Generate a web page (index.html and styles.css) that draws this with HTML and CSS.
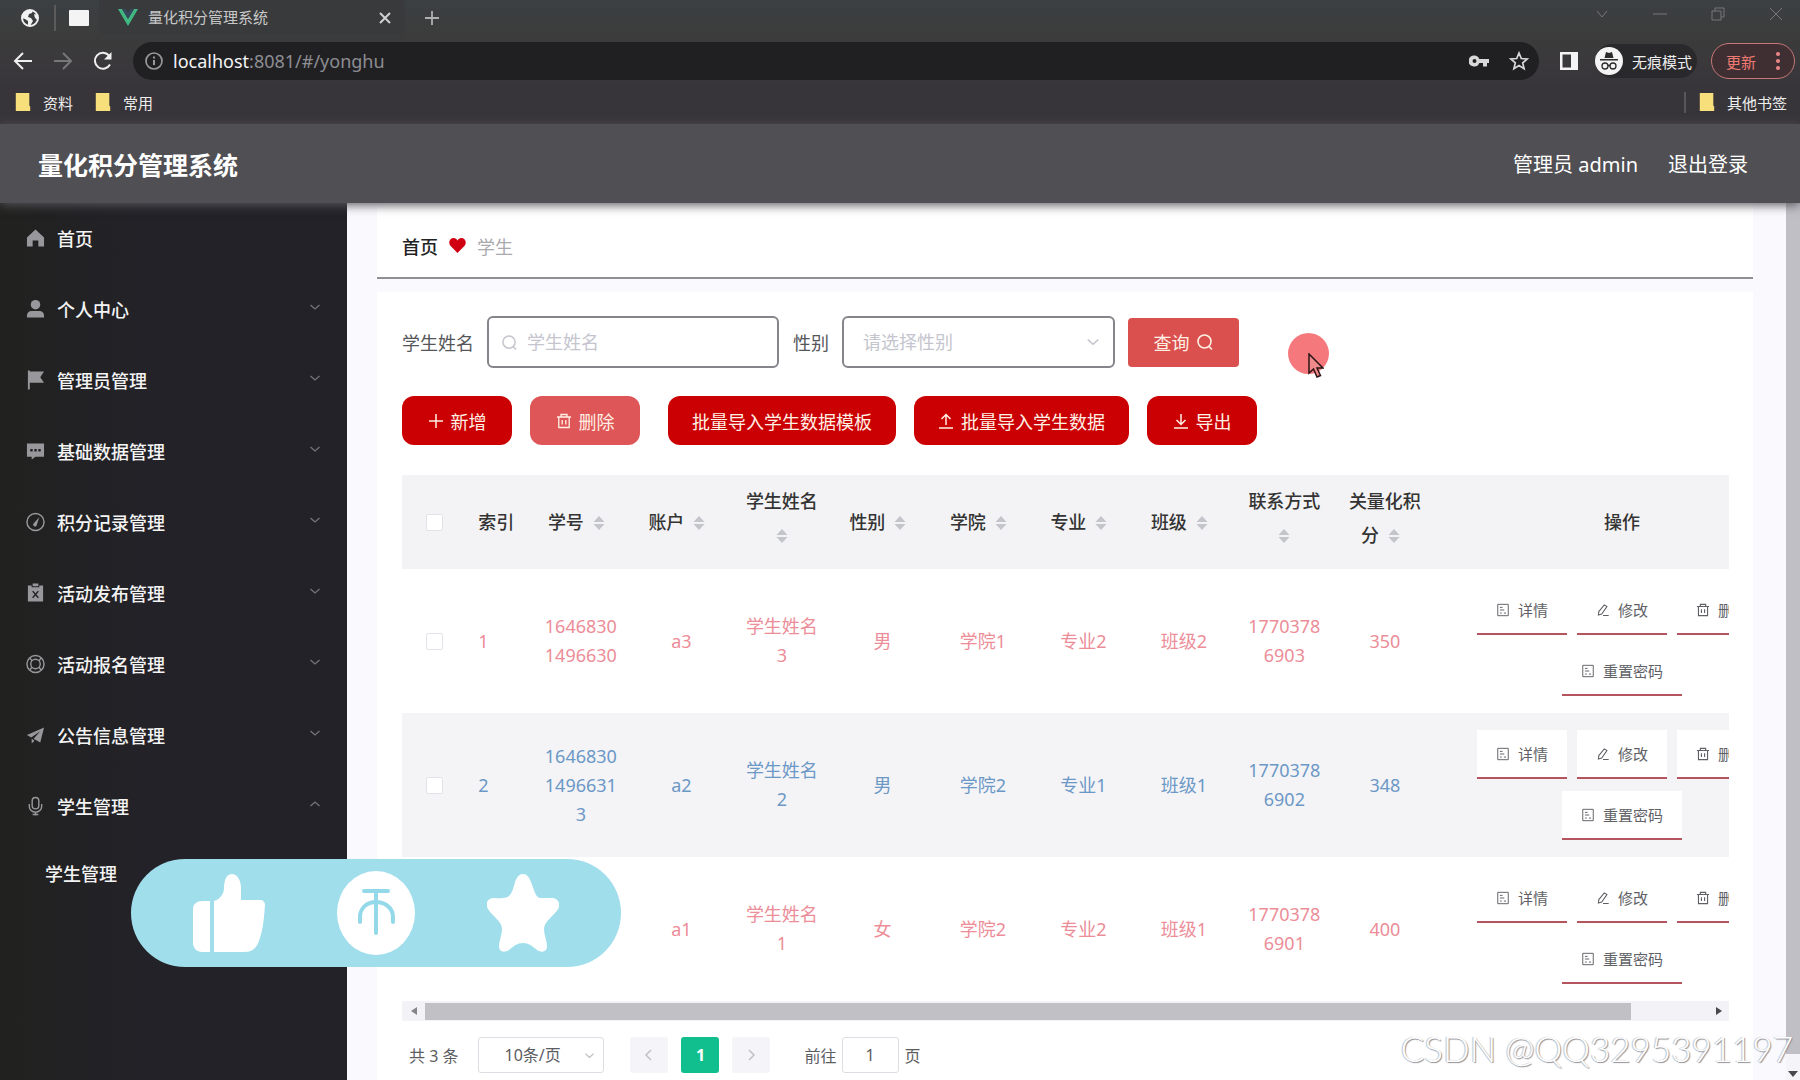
FILE: index.html
```html
<!DOCTYPE html>
<html lang="zh-CN">
<head>
<meta charset="utf-8">
<title>量化积分管理系统</title>
<link rel="stylesheet" href="styles.css">
</head>
<body>
<svg class="defs" aria-hidden="true">
  <symbol id="i-down" viewBox="0 0 12 12"><path d="M1.500 4l4.500 4 4.500-4" fill="none" stroke="currentColor" stroke-width="1.300"/></symbol>
  <symbol id="i-search" viewBox="0 0 18 18"><circle cx="8.500" cy="8.500" r="6.500" fill="none" stroke="currentColor" stroke-width="1.600"/><path d="M13 13.500l3 3" stroke="currentColor" stroke-width="1.600"/></symbol>
  <symbol id="i-trash" viewBox="0 0 16 16"><path d="M1 4h14M5 4V1.500h6V4M2.800 4v10.500h10.400V4M6.200 7v4.500M9.800 7v4.500" fill="none" stroke="currentColor" stroke-width="1.300"/></symbol>
  <symbol id="i-doc" viewBox="0 0 16 16"><path d="M2 1.500h12v13H2zM4.500 5h3M4.500 8h5M4.500 11.500h2M9 11.500h2.500" fill="none" stroke="currentColor" stroke-width="1.100"/></symbol>
  <symbol id="i-edit" viewBox="0 0 16 16"><path d="M9.500 2.200l3 2-6 8.300-3.800 1.300.5-4zM8 14.200h6.500" fill="none" stroke="currentColor" stroke-width="1.200"/></symbol>
  <symbol id="i-sort" viewBox="0 0 12 16"><path d="M6 1l5.500 6H.5zM6 15l5.500-6H.5z" fill="#c3c5ca"/></symbol>
  <symbol id="i-folder" viewBox="0 0 16 20"><path d="M0 0h15v14l1 1v5H0z" fill="#f7e07c"/></symbol>
</svg>

<div class="browser">
  <div class="tabs">
    <svg class="globe" viewBox="0 0 20 20"><circle cx="10" cy="10" r="8" fill="none" stroke="#f1f1f1" stroke-width="2"/><path d="M3 5l5-3h5l-1 3-3 1-1 3 3 1 2 3-3 5-2-1v-4l-3-2-3-1z" fill="#f1f1f1"/><path d="M14 6l4 1v5l-3-2z" fill="#f1f1f1"/></svg>
    <span class="sep"></span>
    <span class="blank"></span>
    <div class="tab">
      <svg class="vue" viewBox="0 0 20 17"><path d="M0 0h4l6 10 6-10h4L10 17z" fill="#41b883"/><path d="M4 0h3.500L10 4l2.500-4H16l-6 10z" fill="#35495e"/></svg>
      <span>量化积分管理系统</span>
      <button class="plain close" aria-label="关闭"><svg viewBox="0 0 12 12"><path d="M1 1l10 10M11 1L1 11" stroke="currentColor" stroke-width="2"/></svg></button>
    </div>
    <button class="plain plus" aria-label="新标签页"><svg viewBox="0 0 16 16"><path d="M8 1v14M1 8h14" stroke="currentColor" stroke-width="1.800"/></svg></button>
    <div class="window">
      <svg viewBox="0 0 14 14"><path d="M2 4l5 6 5-6" /></svg>
      <svg viewBox="0 0 14 14"><path d="M0 7h14" /></svg>
      <svg viewBox="0 0 14 14"><path d="M1 4h9v9H1zM4 4V1h9v9h-3" /></svg>
      <svg viewBox="0 0 14 14"><path d="M1 1l12 12M13 1L1 13" /></svg>
    </div>
  </div>
  <div class="toolbar">
    <svg class="nav" viewBox="0 0 20 20"><path d="M19 10H2M10 2l-8 8 8 8" /></svg>
    <svg class="nav dim" viewBox="0 0 20 20"><path d="M1 10h17M10 2l8 8-8 8" /></svg>
    <svg class="nav" viewBox="0 0 20 20"><path d="M17 13.500A8 8 0 1 1 16 4.500" /><path d="M18.500 1v7.500H11z" class="solid"/></svg>
    <div class="address">
      <svg class="info" viewBox="0 0 18 18"><circle cx="9" cy="9" r="8" fill="none" stroke="currentColor" stroke-width="1.700"/><path d="M9 8v5M9 4.500v2" stroke="currentColor" stroke-width="2"/></svg>
      <span class="url"><b>localhost</b>:8081/#/yonghu</span>
      <svg class="key" viewBox="0 0 20 12"><path d="M5.500 0.500a5.500 5.500 0 1 0 4.800 7.500H14v3.500h4V8h2V4h-9.700A5.500 5.500 0 0 0 5.500.5zm0 3.500a2 2 0 1 1 0 4 2 2 0 0 1 0-4z" fill="currentColor" fill-rule="evenodd"/></svg>
      <svg class="fav" viewBox="0 0 20 20"><path d="M10 2l2.300 5.500 5.900.5-4.500 3.900 1.400 5.800L10 14.600l-5.100 3.100 1.400-5.800L1.800 8l5.900-.5z" fill="none" stroke="currentColor" stroke-width="1.700"/></svg>
    </div>
    <svg class="panel" viewBox="0 0 18 18"><path d="M0 0h18v18H0zM2.500 2.500v13H11v-13z" fill="#f4f4f4" fill-rule="evenodd"/></svg>
    <div class="incog">
      <svg viewBox="0 0 28 28"><circle cx="14" cy="14" r="14" fill="#f4f4f4"/><path d="M9.500 11l1.500-6 3 1 3-1 1.500 6zM5 12h18v1.500H5z" fill="#2b2b2b"/><g fill="none" stroke="#2b2b2b" stroke-width="1.300"><circle cx="10" cy="19" r="3"/><circle cx="18" cy="19" r="3"/><path d="M13 18.500h2"/></g></svg>
      <span>无痕模式</span>
    </div>
    <button class="update">更新<svg viewBox="0 0 4 18"><circle cx="2" cy="2" r="2"/><circle cx="2" cy="9" r="2"/><circle cx="2" cy="16" r="2"/></svg></button>
  </div>
  <div class="bookmarks">
    <a href="#"><svg><use href="#i-folder"/></svg>资料</a>
    <a href="#"><svg><use href="#i-folder"/></svg>常用</a>
    <a href="#" class="other"><svg><use href="#i-folder"/></svg>其他书签</a>
  </div>
</div>

<header class="header">
  <h1>量化积分管理系统</h1>
  <span>管理员 admin</span>
  <a href="#">退出登录</a>
</header>

<div class="layout">
  <nav class="side">
    <a href="#" class="home"><svg class="ic" viewBox="0 0 20 20"><path d="M10 1l9 8.500V19h-6v-6.500H7V19H1V9.500z" fill="currentColor"/></svg>首页</a>
    <a href="#"><svg class="ic" viewBox="0 0 20 20"><circle cx="10" cy="5.500" r="5" fill="currentColor"/><path d="M1 19v-2c0-3 2-5 5-5h8c3 0 5 2 5 5v2z" fill="currentColor"/></svg>个人中心<svg class="chev"><use href="#i-down"/></svg></a>
    <a href="#"><svg class="ic" viewBox="0 0 20 20"><path d="M2 0h2v1h15l-4 6 4 6H4v7H2z" fill="currentColor"/></svg>管理员管理<svg class="chev"><use href="#i-down"/></svg></a>
    <a href="#"><svg class="ic" viewBox="0 0 20 20"><path d="M1 2h18v14h-9l-4 3v-3H1z" fill="currentColor"/><path d="M4.500 8h2.500v2.500H4.500zM8.800 8h2.500v2.500H8.800zM13 8h2.500v2.500H13z" fill="#222"/></svg>基础数据管理<svg class="chev"><use href="#i-down"/></svg></a>
    <a href="#"><svg class="ic" viewBox="0 0 20 20"><circle cx="10" cy="10" r="9" fill="none" stroke="currentColor" stroke-width="1.500"/><path d="M14 5l-2.500 7.500a2 2 0 1 1-3-1.500z" fill="currentColor"/></svg>积分记录管理<svg class="chev"><use href="#i-down"/></svg></a>
    <a href="#"><svg class="ic" viewBox="0 0 20 20"><path d="M2 2h4v2h8V2h4v17H2zM7 0h6v3H7z" fill="currentColor"/><path d="M7 8l6 7M13 8l-6 7" stroke="#222" stroke-width="1.500"/></svg>活动发布管理<svg class="chev"><use href="#i-down"/></svg></a>
    <a href="#"><svg class="ic" viewBox="0 0 20 20"><g fill="none" stroke="currentColor" stroke-width="1.500"><circle cx="10" cy="10" r="9"/><circle cx="10" cy="10" r="5"/><path d="M6.500 6.500L4 4M13.500 6.500L16 4M6.500 13.500L4 16M13.500 13.500L16 16"/></g></svg>活动报名管理<svg class="chev"><use href="#i-down"/></svg></a>
    <a href="#"><svg class="ic" viewBox="0 0 20 20"><path d="M19 2L1 10l4.500 2.500L15 6l-7 8 7 4zM6 14v5l3-3z" fill="currentColor"/></svg>公告信息管理<svg class="chev"><use href="#i-down"/></svg></a>
    <a href="#"><svg class="ic" viewBox="0 0 20 20"><g fill="none" stroke="currentColor" stroke-width="1.500"><rect x="6.500" y="1" width="7" height="12" rx="3.500"/><path d="M3.500 8v2.500a6.500 6 0 0 0 13 0V8M10 16.500V20M7 19h6"/></g></svg>学生管理<svg class="chev up"><use href="#i-down"/></svg></a>
    <a href="#" class="sub">学生管理</a>
  </nav>

  <main class="main">
    <div class="crumb">
      <a href="#">首页</a>
      <svg viewBox="0 0 16 14"><path d="M8 14L1.300 7.200C-1 4.500.7 0 4.300 0 6 0 7.300 1 8 2.200 8.700 1 10 0 11.700 0c3.600 0 5.300 4.500 3 7.200z" fill="#d00012"/></svg>
      <span>学生</span>
    </div>

    <section class="card">
      <form class="search">
        <label for="name">学生姓名</label>
        <div class="field name"><svg><use href="#i-search"/></svg><input id="name" type="text" placeholder="学生姓名"></div>
        <label for="sex">性别</label>
        <div class="field sex"><select id="sex"><option>请选择性别</option><option>男</option><option>女</option></select><svg class="chev"><use href="#i-down"/></svg></div>
        <button type="button" class="query">查询<svg><use href="#i-search"/></svg></button>
      </form>

      <div class="actions">
        <button class="btn"><svg viewBox="0 0 16 16"><path d="M8 1v14M1 8h14"/></svg>新增</button>
        <button class="btn off"><svg><use href="#i-trash"/></svg>删除</button>
        <button class="btn tpl">批量导入学生数据模板</button>
        <button class="btn"><svg viewBox="0 0 16 16"><path d="M8 12V2M3.500 6L8 1.500 12.500 6M1 15h14"/></svg>批量导入学生数据</button>
        <button class="btn"><svg viewBox="0 0 16 16"><path d="M8 1v10M3.500 7L8 11.500 12.500 7M1 15h14"/></svg>导出</button>
      </div>

      <div class="grid">
        <table>
          <colgroup><col class="c-check"><col class="c-index"><col span="9" class="c-data"><col class="c-ops"></colgroup>
          <thead>
            <tr>
              <th class="check"><input type="checkbox" aria-label="全选"></th>
              <th class="index">索引</th>
              <th>学号<svg><use href="#i-sort"/></svg></th>
              <th>账户<svg><use href="#i-sort"/></svg></th>
              <th class="two">学生姓名<svg><use href="#i-sort"/></svg></th>
              <th>性别<svg><use href="#i-sort"/></svg></th>
              <th>学院<svg><use href="#i-sort"/></svg></th>
              <th>专业<svg><use href="#i-sort"/></svg></th>
              <th>班级<svg><use href="#i-sort"/></svg></th>
              <th class="two">联系方式<svg><use href="#i-sort"/></svg></th>
              <th class="two">关量化积分<svg><use href="#i-sort"/></svg></th>
              <th>操作</th>
            </tr>
          </thead>
          <tbody>
            <tr>
              <td class="check"><input type="checkbox" aria-label="选择第1行"></td><td class="index">1</td>
              <td>16468301496630</td><td>a3</td><td>学生姓名3</td><td>男</td><td>学院1</td><td>专业2</td><td>班级2</td><td>17703786903</td><td>350</td>
              <td class="ops"><div>
                <button><svg><use href="#i-doc"/></svg>详情</button><button><svg><use href="#i-edit"/></svg>修改</button><button><svg><use href="#i-trash"/></svg>删除</button><button><svg><use href="#i-doc"/></svg>重置密码</button>
              </div></td>
            </tr>
            <tr class="alt">
              <td class="check"><input type="checkbox" aria-label="选择第2行"></td><td class="index">2</td>
              <td>164683014966313</td><td>a2</td><td>学生姓名2</td><td>男</td><td>学院2</td><td>专业1</td><td>班级1</td><td>17703786902</td><td>348</td>
              <td class="ops"><div>
                <button><svg><use href="#i-doc"/></svg>详情</button><button><svg><use href="#i-edit"/></svg>修改</button><button><svg><use href="#i-trash"/></svg>删除</button><button><svg><use href="#i-doc"/></svg>重置密码</button>
              </div></td>
            </tr>
            <tr>
              <td class="check"></td><td class="index"></td>
              <td></td><td>a1</td><td>学生姓名1</td><td>女</td><td>学院2</td><td>专业2</td><td>班级1</td><td>17703786901</td><td>400</td>
              <td class="ops"><div>
                <button><svg><use href="#i-doc"/></svg>详情</button><button><svg><use href="#i-edit"/></svg>修改</button><button><svg><use href="#i-trash"/></svg>删除</button><button><svg><use href="#i-doc"/></svg>重置密码</button>
              </div></td>
            </tr>
          </tbody>
        </table>
      </div>
      <div class="hbar">
        <svg viewBox="0 0 6 8"><path d="M6 0v8L0 4z" fill="#85858a"/></svg>
        <div class="track"><div class="thumb"></div></div>
        <svg viewBox="0 0 6 8"><path d="M0 0v8l6-4z" fill="#48484e"/></svg>
      </div>

      <div class="pager">
        <span>共 3 条</span>
        <div class="size"><select aria-label="每页条数"><option>10条/页</option></select><svg><use href="#i-down"/></svg></div>
        <button class="arrow" aria-label="上一页"><svg viewBox="0 0 12 12"><path d="M8 1L3 6l5 5"/></svg></button>
        <button class="page">1</button>
        <button class="arrow" aria-label="下一页"><svg viewBox="0 0 12 12"><path d="M4 1l5 5-5 5"/></svg></button>
        <label for="goto">前往</label>
        <input id="goto" type="text" value="1">
        <span>页</span>
      </div>
    </section>
  </main>

  <div class="vbar">
    <div class="thumb"></div>
    <svg viewBox="0 0 10 6"><path d="M0 0h10L5 6z" fill="#48484e"/></svg>
  </div>
</div>

<div class="spot"></div>
<svg class="cursor" viewBox="0 0 16 25"><path d="M1 1v19l4.500-4 3.500 8 3.500-1.500L9 15h6z" fill="#f08a8a" stroke="#2a1416" stroke-width="1.500"/></svg>

<div class="likes">
  <svg class="thumb-up" viewBox="0 0 72 78"><path d="M17 27v51H9c-5 0-9-4-9-9V35c0-5 4-8 9-8zM21 78V27c6-2 9-6 10-12 0-10 3-15 8-15s9 6 9 14v12h19c3 0 5 2 5 5-1 14-2 25-6 36-3 8-7 11-15 11z" fill="#fff"/></svg>
  <svg class="coin" viewBox="0 0 78 84"><ellipse cx="39" cy="42" rx="39" ry="42" fill="#fff"/><path d="M27 20h24M39 21v41M23 51v-5c0-9 7-15 16-15s17 6 17 15v5" fill="none" stroke="#94d9ea" stroke-width="4" stroke-linecap="round"/></svg>
  <svg class="star" viewBox="0 0 72 78"><path d="M36 0c4 0 6 3 8 8 4 11 5 15 9 16h12c6 0 9 6 6 11-4 7-14 12-14 20 0 6 3 12 3 17 0 6-5 7-10 4-5-4-8-7-14-7s-9 3-14 7c-5 3-10 2-10-4 0-5 3-11 3-17 0-8-10-13-14-20-3-5-1-11 6-11 16 1 17-1 21-16 2-5 4-8 8-8z" fill="#fff"/></svg>
</div>

<div class="mark">CSDN @QQ3295391197</div>
</body>
</html>
```

FILE: styles.css
```css
* { box-sizing: border-box; }

body {
  margin: 0;
  height: 100vh;
  display: flex;
  flex-direction: column;
  overflow: hidden;
  position: relative;
  font-family: "Noto Sans", "Noto Sans CJK SC", sans-serif;
  font-size: 18px;
  color: #333;
  background: #fff;
}

a { color: inherit; text-decoration: none; }
button, input, select { font: inherit; color: inherit; margin: 0; }
svg { flex: none; }
.defs { position: absolute; width: 0; height: 0; }
.plain { border: 0; padding: 0; background: none; display: flex; }

/* browser frame */
.browser {
  flex: none;
  height: 124px;
  background: linear-gradient(#3b4043, #3c3c3c 32px, #38353a 90px);
  color: #eee;
  font-size: 15px;
}
.tabs { height: 35px; display: flex; align-items: center; padding-left: 20px; }
.globe { width: 20px; height: 20px; }
.sep { width: 2px; height: 26px; background: #5b5b5b; margin: 0 13px 0 14px; }
.blank { width: 20px; height: 16px; background: #f4f4f4; border-radius: 1px; }
.tab {
  align-self: stretch;
  width: 306px;
  margin-left: 10px;
  padding: 0 14px 0 19px;
  display: flex;
  align-items: center;
  gap: 10px;
  background: #383a3c;
  color: #c8c8c8;
}
.tab span { line-height: 20px; padding-bottom: 2px; }
.vue { width: 20px; height: 17px; }
.close { margin-left: auto; color: #d0d0d0; }
.close svg { width: 12px; height: 12px; }
.plus { margin-left: 19px; color: #b0b0b0; }
.plus svg { width: 16px; height: 16px; }
.window { margin-left: auto; display: flex; gap: 44px; padding: 0 17px 8px 0; }
.window svg { width: 14px; height: 14px; fill: none; stroke: #77777a; stroke-width: 1; }

.toolbar { height: 52px; display: flex; align-items: center; padding: 0 5px 0 13px; }
.nav { width: 20px; height: 20px; margin-right: 20px; fill: none; stroke: #f0f0f0; stroke-width: 2; }
.nav .solid { fill: #f0f0f0; stroke: none; }
.dim { stroke: #77777a; }
.address {
  flex: 1;
  height: 38px;
  margin-right: 21px;
  padding: 0 10px 0 12px;
  border-radius: 19px;
  background: #202023;
  display: flex;
  align-items: center;
  color: #d8d8d8;
}
.info { width: 18px; height: 18px; color: #98989b; }
.url { margin: 0 auto 0 10px; font-size: 18px; color: #8d8d92; }
.url b { font-weight: 400; color: #f4f4f4; }
.key { width: 20px; height: 12px; margin-right: 20px; }
.fav { width: 20px; height: 20px; }
.panel { width: 18px; height: 18px; margin-right: 17px; }
.incog {
  height: 34px;
  display: flex;
  align-items: center;
  gap: 9px;
  padding-right: 5px;
  border-radius: 17px;
  background: #29292c;
}
.incog svg { width: 28px; height: 28px; }
.update {
  width: 84px;
  height: 36px;
  margin-left: 14px;
  padding: 0 14px;
  display: flex;
  align-items: center;
  justify-content: space-between;
  border: 1px solid #c87878;
  border-radius: 18px;
  background: #3f2f32;
  color: #f07a72;
}
.update svg { width: 4px; height: 18px; fill: #e88; }

.bookmarks { height: 30px; display: flex; align-items: center; gap: 22px; padding: 0 13px 0 15px; }
.bookmarks a { display: flex; align-items: center; gap: 12px; }
.bookmarks svg { width: 16px; height: 18px; }
.bookmarks .other { margin-left: auto; padding-left: 13px; border-left: 2px solid #57565a; }

/* app header */
.header {
  flex: none;
  height: 79px;
  padding: 0 52px 0 38px;
  display: flex;
  align-items: center;
  gap: 30px;
  background: #504f54;
  color: #fff;
  font-size: 20px;
  box-shadow: 0 2px 10px #55555c;
  z-index: 1;
}
.header h1 { margin: 0 auto 0 0; font-size: 25px; font-weight: 700; }

.layout { flex: 1; min-height: 0; display: flex; }

/* side menu */
.side { flex: none; width: 347px; overflow: hidden; background: linear-gradient(90deg, #21211f, #232228 40%); color: #f4f4f4; }
.side a { height: 71px; padding: 0 26px; display: flex; align-items: center; gap: 12px; font-weight: 500; }
.side .home { height: 70px; }
.ic { width: 19px; height: 20px; color: #98989c; }
.side .chev { width: 12px; height: 12px; margin: 0 0 4px auto; color: #74747a; }
.side .up { transform: rotate(180deg); }
.side .sub { height: 64px; padding-left: 45px; }

/* content */
.main { flex: 1; min-width: 0; overflow: hidden; padding: 0 33px 0 30px; background: #f9f9fe; }
.crumb {
  height: 76px;
  padding: 11px 25px 0;
  display: flex;
  align-items: center;
  gap: 11px;
  background: #fff;
  border-bottom: 2px solid #8f8f94;
}
.crumb svg { width: 17px; height: 15px; }
.crumb a { color: #222; font-weight: 500; }
.crumb span { color: #a9a9ae; }

.card { margin-top: 13px; padding: 24px 24px 24px 25px; background: #fff; min-height: 100%; }

.search { display: flex; align-items: center; height: 52px; }
.search label { margin-right: 13px; color: #55565a; }
.field {
  height: 52px;
  display: flex;
  align-items: center;
  border: 2px solid #85858b;
  border-radius: 6px;
  color: #c4c5ce;
}
.field input, .field select { flex: 1; min-width: 0; border: 0; padding: 0; background: none; outline: 0; appearance: none; }
.field input::placeholder { color: #c4c5ce; }
.field svg { width: 17px; height: 17px; margin: 0 9px 0 12px; }
.name { width: 292px; margin-right: 14px; }
.sex { width: 273px; margin-right: 13px; padding-left: 19px; }
.field .chev { width: 14px; height: 14px; margin: 0 13px 0 0; }
.query {
  width: 111px;
  height: 49px;
  padding: 0;
  display: flex;
  align-items: center;
  justify-content: center;
  gap: 6px;
  border: 0;
  border-radius: 4px;
  background: #da504f;
  color: #fff0e4;
}
.query svg { width: 18px; height: 18px; }

.actions { display: flex; gap: 18px; margin-top: 28px; }
.btn {
  height: 49px;
  min-width: 110px;
  padding: 0 24px;
  display: flex;
  align-items: center;
  justify-content: center;
  gap: 7px;
  border: 0;
  border-radius: 12px;
  background: #cb0003;
  color: #fff0e4;
}
.btn svg { width: 16px; height: 16px; fill: none; stroke: currentColor; stroke-width: 1.5; }
.off { background: #de5658; }
.tpl { margin-left: 10px; }

/* table */
.grid { margin-top: 30px; overflow: hidden; }
table { width: 1407px; table-layout: fixed; border-collapse: collapse; text-align: center; }
.c-check { width: 64px; }
.c-index { width: 64px; }
.c-data { width: 100px; }
.c-ops { width: 372px; }
th { height: 94px; padding: 12px; line-height: 34px; background: #f3f3f5; color: #333; font-weight: 500; word-break: break-all; }
th.two { padding-top: 8px; padding-bottom: 16px; }
th svg { width: 12px; height: 16px; margin: 0 9px; vertical-align: -2px; }
td { height: 144px; padding: 12px; line-height: 29px; color: #ec8d98; word-break: break-all; }
.alt td { background: #f4f4f7; color: #6c98c6; }
th.check, td.check { padding: 0; }
th.index, td.index { text-align: left; padding-right: 0; }
.check input {
  appearance: none;
  display: block;
  width: 17px;
  height: 17px;
  margin: 0 auto;
  border: 1px solid #e2e2e8;
  border-radius: 2px;
  background: #fff;
}
.ops div { display: flex; flex-wrap: wrap; justify-content: center; gap: 12px 10px; width: 300px; margin: 0 auto; }
.ops button {
  height: 49px;
  padding: 0 19px;
  display: flex;
  align-items: center;
  gap: 8px;
  border: 0;
  border-bottom: 2px solid #b4545d;
  background: #fff;
  font-size: 15px;
  line-height: 20px;
  color: #606166;
}
.ops svg { width: 14px; height: 14px; }

.hbar { height: 20px; padding: 0 7px 0 9px; display: flex; align-items: center; background: #f3f3f7; }
.hbar svg { width: 6px; height: 8px; }
.track { flex: 1; margin: 0 8px; }
.hbar .thumb { width: 94%; height: 17px; background: #c1c0c5; }

/* paging */
.pager { margin-top: 16px; padding-left: 7px; display: flex; align-items: center; font-size: 16px; color: #5c5d62; }
.size { width: 126px; height: 36px; margin: 0 26px 0 20px; padding: 0 8px 0 25px; display: flex; align-items: center; border: 1px solid #dddde3; border-radius: 3px; }
.size select { flex: 1; border: 0; padding: 0; background: none; appearance: none; }
.size svg { width: 11px; height: 11px; color: #bbb; }
.arrow, .page { width: 38px; height: 36px; padding: 0; border: 0; border-radius: 3px; background: #f5f4f8; }
.arrow svg { width: 12px; height: 12px; fill: none; stroke: #c0c0c8; stroke-width: 1.5; }
.page { margin: 0 13px; background: #10be8e; color: #fff; font-weight: 700; }
.pager label { margin: 0 5px 0 34px; }
.pager input { width: 57px; height: 36px; margin-right: 6px; padding: 0; text-align: center; border: 1px solid #dddde3; border-radius: 3px; background: #fff; }

.vbar { flex: none; width: 14px; display: flex; flex-direction: column; align-items: center; background: #f5f4f9; }
.vbar .thumb { width: 14px; flex: 1; background: #c1bfc6; }
.vbar svg { width: 10px; height: 6px; margin: 17px 0 3px; }

/* overlays */
.spot { position: absolute; left: 1288px; top: 333px; width: 41px; height: 41px; border-radius: 50%; background: #f5797c; }
.cursor { position: absolute; left: 1308px; top: 353px; width: 16px; height: 25px; }
.likes {
  position: absolute;
  z-index: 2;
  left: 131px;
  top: 859px;
  width: 490px;
  height: 108px;
  padding: 0 62px;
  display: flex;
  align-items: center;
  justify-content: space-between;
  border-radius: 54px;
  background: #a0deec;
}
.thumb-up, .star { width: 72px; height: 78px; }
.coin { width: 78px; height: 84px; }
.mark {
  position: absolute;
  z-index: 3;
  right: 7px;
  bottom: 12px;
  font-family: Lato, "Noto Sans", sans-serif;
  font-size: 35px;
  line-height: 40px;
  font-weight: 300;
  color: #fff;
  text-shadow: 1px 1px 1px #909095, -1px 0 1px #c0c0c4;
  white-space: nowrap;
}
```
